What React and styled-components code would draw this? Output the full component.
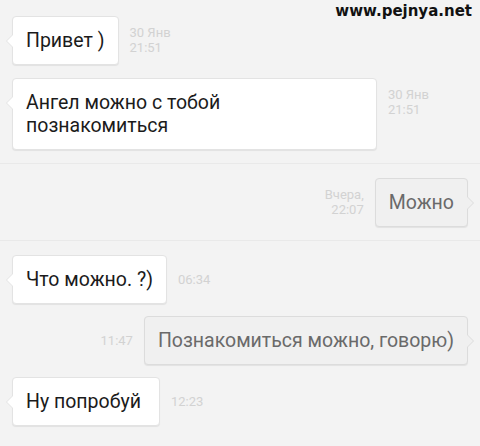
import React from 'react'
import styled, { createGlobalStyle } from 'styled-components'

const Global = createGlobalStyle`
    html, body {
        margin: 0;
        padding: 0;
        background: #f3f3f3;
    }
    * {
        box-sizing: border-box;
    }
`

const Screen = styled.div`
    position: relative;
    width: 480px;
    height: 446px;
    overflow: hidden;
    background: #f3f3f3;
    font-family: Roboto, "Noto Sans", sans-serif;
`

const Watermark = styled.div`
    position: absolute;
    top: 2px;
    right: 8px;
    font-family: "DejaVu Sans", Verdana, sans-serif;
    font-weight: 700;
    font-size: 15px;
    color: #111;
`

const Section = styled.section`
    display: flex;
    flex-direction: column;
    row-gap: ${p => p.$gap || 13}px;
    padding: ${p => p.$top || 14}px 12px 13px;
    border-top: ${p => p.$first ? 'none' : '1px solid #e9e9e9'};
`

const Row = styled.div`
    display: flex;
    align-items: flex-start;
    justify-content: ${p => p.$out ? 'flex-end' : 'flex-start'};
`

const Bubble = styled.div`
    position: relative;
    flex: none;
    width: ${p => p.$width ? `${p.$width}px` : 'auto'};
    padding: 12px 13px;
    background: ${p => p.$out ? '#f0f0f0' : '#ffffff'};
    border: 1px solid ${p => p.$out ? '#dcdcdc' : '#e3e3e3'};
    border-radius: 4px;
    box-shadow: 0 1px 1px rgba(0, 0, 0, 0.07);
    font-size: 19.5px;
    line-height: 23px;
    color: ${p => p.$out ? '#6a6a6a' : '#1b1b1b'};
    white-space: nowrap;

    &::before,
    &::after {
        content: '';
        position: absolute;
        width: 0;
        height: 0;
        border-style: solid;
        border-color: transparent;
    }

    &::before {
        top: 17px;
        ${p => p.$out ? 'right: -7px;' : 'left: -7px;'}
        border-width: 7px;
        ${p => p.$out
            ? 'border-right-width: 0; border-left-color: #dcdcdc;'
            : 'border-left-width: 0; border-right-color: #e3e3e3;'}
    }

    &::after {
        top: 18px;
        ${p => p.$out ? 'right: -6px;' : 'left: -6px;'}
        border-width: 6px;
        ${p => p.$out
            ? 'border-right-width: 0; border-left-color: #f0f0f0;'
            : 'border-left-width: 0; border-right-color: #ffffff;'}
    }
`

const Time = styled.div`
    height: 48px;
    display: flex;
    flex-direction: column;
    justify-content: center;
    margin: 0 11px;
    font-size: 13px;
    line-height: 15px;
    color: #d2d2d2;
    text-align: ${p => p.$out ? 'right' : 'left'};
`

const Message = ({ out, width, time, children }) => (
    <Row $out={out}>
        {out && <Time $out>{time}</Time>}
        <Bubble $out={out} $width={width}>{children}</Bubble>
        {!out && <Time>{time}</Time>}
    </Row>
)

const App = () => {
    return (
        <>
            <Global />
            <Screen>
                <Section $first $top={16}>
                    <Message time={<><span>30 Янв</span><span>21:51</span></>}>Привет )</Message>
                    <Message width={365} time={<><span>30 Янв</span><span>21:51</span></>}>
                        Ангел можно с тобой<br />познакомиться
                    </Message>
                </Section>
                <Section>
                    <Message out time={<><span>Вчера,</span><span>22:07</span></>}>Можно</Message>
                </Section>
                <Section $gap={12}>
                    <Message time="06:34">Что можно. ?)</Message>
                    <Message out time="11:47">Познакомиться можно, говорю)</Message>
                    <Message width={148} time="12:23">Ну попробуй</Message>
                </Section>
                <Watermark>www.pejnya.net</Watermark>
            </Screen>
        </>
    )
}

export default App
